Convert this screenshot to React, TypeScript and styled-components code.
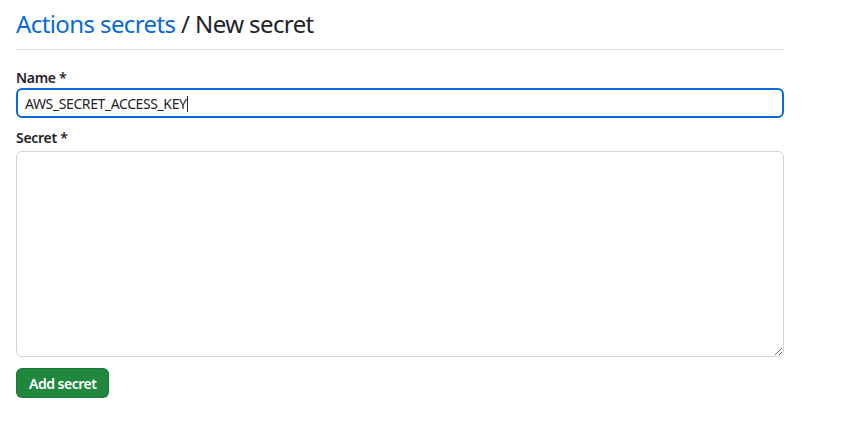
import React from "react";
import styled, { createGlobalStyle } from "styled-components";

const Global = createGlobalStyle`
  html, body { margin: 0; padding: 0; background: #ffffff; }
  body {
    font-family: "Noto Sans", "Open Sans", "Liberation Sans", sans-serif;
    color: #1f2328;
    font-size: 14px;
  }
`;

const Page = styled.div`
  width: 768px;
  padding: 8px 16px 0;
`;

const Header = styled.h2`
  margin: 0 0 18px;
  padding-bottom: 9px;
  border-bottom: 1px solid #d8dee4;
  font-size: 24px;
  font-weight: 400;
  line-height: 32px;
  letter-spacing: -0.6px;
  color: #1f2328;
`;

const Crumb = styled.a`
  color: #0969da;
  text-decoration: none;
`;

const Field = styled.div<{ $gap: number }>`
  display: flex;
  flex-direction: column;
  margin-bottom: ${(p) => p.$gap}px;
`;

const Label = styled.label<{ $space: number }>`
  font-size: 14px;
  font-weight: 600;
  line-height: 20px;
  letter-spacing: -0.3px;
  margin-bottom: ${(p) => p.$space}px;
`;

const InputWrap = styled.div`
  position: relative;
  display: flex;
  flex-direction: column;
`;

const TextInput = styled.input`
  box-sizing: border-box;
  height: 30px;
  padding: 0 7px;
  font: inherit;
  font-size: 14px;
  letter-spacing: -0.4px;
  color: #1f2328;
  border: 2px solid #0969da;
  border-radius: 6px;
  outline: none;
  caret-color: transparent;
`;

const Caret = styled.span`
  position: absolute;
  left: 171px;
  top: 8px;
  width: 1px;
  height: 16px;
  background: #1f2328;
`;

const TextArea = styled.textarea`
  box-sizing: border-box;
  height: 206px;
  padding: 8px;
  font: inherit;
  border: 1px solid #d0d7de;
  border-radius: 6px;
  outline: none;
  resize: vertical;
`;

const Button = styled.button`
  display: block;
  height: 30px;
  padding: 0 12px;
  font: inherit;
  font-size: 14px;
  font-weight: 600;
  letter-spacing: -0.5px;
  color: #ffffff;
  background: #1f883d;
  border: 1px solid rgba(31, 35, 40, 0.15);
  border-radius: 6px;
  cursor: pointer;
`;

export default function App() {
  return (
    <>
      <Global />
      <Page>
        <Header>
          <Crumb href="#">Actions secrets</Crumb> / New secret
        </Header>
        <Field $gap={10}>
          <Label $space={0}>Name *</Label>
          <InputWrap>
            <TextInput defaultValue="AWS_SECRET_ACCESS_KEY" />
            <Caret />
          </InputWrap>
        </Field>
        <Field $gap={11}>
          <Label $space={3}>Secret *</Label>
          <TextArea />
        </Field>
        <Button>Add secret</Button>
      </Page>
    </>
  );
}
